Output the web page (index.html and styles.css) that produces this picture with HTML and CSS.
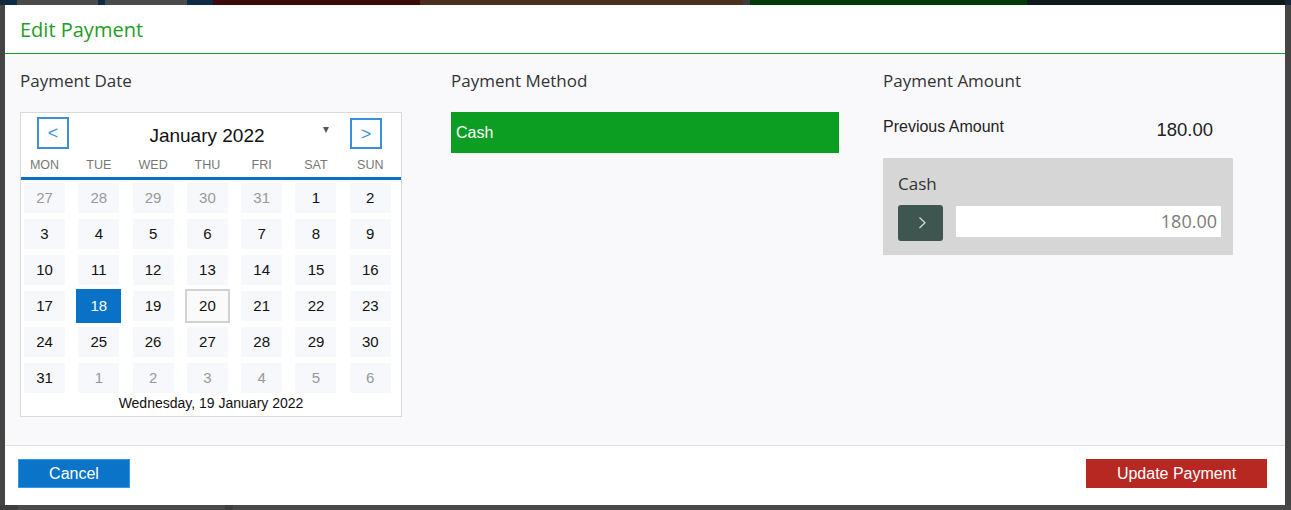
FILE: index.html
```html
<!DOCTYPE html>
<html lang="en">
<head>
<meta charset="utf-8">
<title>Edit Payment</title>
<link rel="stylesheet" href="styles.css">
</head>
<body>
<div class="app">
  <div class="topbar">
    <div class="seg s-navy w12"></div>
    <div class="seg s-gray w81"></div>
    <div class="seg s-navy w7"></div>
    <div class="seg s-gray w82"></div>
    <div class="seg s-navy w26"></div>
    <div class="seg s-red w207"></div>
    <div class="seg s-brown w323"></div>
    <div class="seg s-mid w7"></div>
    <div class="seg s-green w277"></div>
    <div class="seg s-dark w258"></div>
  </div>
  <div class="app-main"></div>
  <div class="bottombar">
    <div class="seg b-dark w18"></div>
    <div class="seg b-gray w207"></div>
    <div class="seg b-dark w8"></div>
    <div class="seg b-gray2 grow"></div>
  </div>
</div>

<div class="modal">
  <header class="modal-head">
    <h1 class="modal-title">Edit Payment</h1>
  </header>
  <div class="modal-rule"></div>

  <section class="modal-body">
    <div class="col">
      <h2 class="col-label">Payment Date</h2>
      <div class="cal">
        <div class="cal-head">
          <button class="cal-nav">&lt;</button>
          <div class="cal-month">January 2022<span class="cal-caret"></span></div>
          <button class="cal-nav">&gt;</button>
        </div>
        <div class="cal-grid cal-dow">
          <span>MON</span><span>TUE</span><span>WED</span><span>THU</span><span>FRI</span><span>SAT</span><span>SUN</span>
        </div>
        <div class="cal-grid cal-days">
          <span class="day other">27</span><span class="day other">28</span><span class="day other">29</span><span class="day other">30</span><span class="day other">31</span><span class="day">1</span><span class="day">2</span>
          <span class="day">3</span><span class="day">4</span><span class="day">5</span><span class="day">6</span><span class="day">7</span><span class="day">8</span><span class="day">9</span>
          <span class="day">10</span><span class="day">11</span><span class="day">12</span><span class="day">13</span><span class="day">14</span><span class="day">15</span><span class="day">16</span>
          <span class="day">17</span><span class="day selected">18</span><span class="day">19</span><span class="day today">20</span><span class="day">21</span><span class="day">22</span><span class="day">23</span>
          <span class="day">24</span><span class="day">25</span><span class="day">26</span><span class="day">27</span><span class="day">28</span><span class="day">29</span><span class="day">30</span>
          <span class="day">31</span><span class="day other">1</span><span class="day other">2</span><span class="day other">3</span><span class="day other">4</span><span class="day other">5</span><span class="day other">6</span>
        </div>
        <div class="cal-foot">Wednesday, 19 January 2022</div>
      </div>
    </div>

    <div class="col">
      <h2 class="col-label">Payment Method</h2>
      <div class="method">Cash</div>
    </div>

    <div class="col">
      <h2 class="col-label">Payment Amount</h2>
      <div class="amount">
        <div class="prev-row">
          <span class="prev-label">Previous Amount</span>
          <span class="prev-value">180.00</span>
        </div>
        <div class="tender">
          <div class="tender-label">Cash</div>
          <div class="tender-row">
            <button class="tender-btn" aria-label="Fill">
              <svg width="45" height="36" viewBox="0 0 45 36"><polyline points="21.5,12.5 27,17.8 21.5,23" fill="none" stroke="#d8dedc" stroke-width="1.2"/></svg>
            </button>
            <div class="tender-input">180.00</div>
          </div>
        </div>
      </div>
    </div>
  </section>

  <footer class="modal-foot">
    <button class="btn btn-cancel">Cancel</button>
    <button class="btn btn-update">Update Payment</button>
  </footer>
</div>
</body>
</html>
```

FILE: styles.css
```css
* { box-sizing: border-box; }

html, body {
  margin: 0;
  padding: 0;
  height: 100%;
  overflow: hidden;
}

body {
  background: #444444;
  font-family: "Liberation Sans", Arial, sans-serif;
}

/* ---- dimmed app behind the dialog ---- */
.app {
  height: 100%;
  display: flex;
  flex-direction: column;
  background: #444444;
}
.topbar {
  height: 5px;
  display: flex;
  padding-left: 5px;
  background: #15293b;
}
.app-main { flex: 1; }
.bottombar {
  height: 5px;
  display: flex;
  background: #474747;
}
.seg { height: 100%; }
.w7 { width: 7px; }
.w8 { width: 8px; }
.w12 { width: 12px; }
.w18 { width: 18px; }
.w26 { width: 26px; }
.w81 { width: 81px; }
.w82 { width: 82px; }
.w207 { width: 207px; }
.w258 { width: 258px; }
.w277 { width: 277px; }
.w323 { width: 323px; }
.grow { flex: 1; }
.s-navy { background: #0d2b45; }
.s-gray { background: #4b4b4b; }
.s-red { background: #3b0b0b; }
.s-brown { background: #4c2f1e; }
.s-mid { background: #3c3c3c; }
.s-green { background: #043a0a; }
.s-dark { background: #111a1a; }
.b-dark { background: #3e3e3e; }
.b-gray { background: #4a4a4a; }
.b-gray2 { background: #484848; }

/* ---- dialog ---- */
.modal {
  position: fixed;
  left: 5px;
  top: 5px;
  width: 1280px;
  height: 500px;
  background: #ffffff;
  display: flex;
  flex-direction: column;
}

.modal-head {
  height: 48px;
  flex: none;
  padding: 2px 15px 0 15px;
  display: flex;
  align-items: center;
  background: #ffffff;
}
.modal-rule {
  height: 1px;
  flex: none;
  background: #0ea51f;
}
.modal-title {
  margin: 0;
  font-family: "Open Sans", sans-serif;
  font-weight: 400;
  font-size: 20px;
  line-height: 26px;
  color: #1f9d24;
}

.modal-body {
  flex: 1;
  background: #f9f9fc;
  display: grid;
  grid-template-columns: 431px 432px 1fr;
  align-content: start;
  padding: 15px 15px 0 15px;
  border-bottom: 1px solid #dedede;
}

.col-label {
  margin: 0 0 19px 0;
  font-family: "Open Sans", sans-serif;
  font-weight: 400;
  font-size: 17px;
  line-height: 24px;
  color: #333333;
}

/* ---- calendar ---- */
.cal {
  width: 382px;
  border: 1px solid #d9d9d9;
  background: #ffffff;
}
.cal-head {
  display: flex;
  align-items: flex-start;
  padding: 4px 19px 0 16px;
  height: 36px;
}
.cal-nav {
  width: 32px;
  height: 32px;
  border: 2px solid #3c8fdb;
  background: #ffffff;
  color: #3c8fdb;
  font-family: "Liberation Sans", Arial, sans-serif;
  font-size: 18px;
  line-height: 26px;
  padding: 0;
  margin: 0;
}
.cal-nav:last-child { margin-top: 1px; height: 31px; }
.cal-month {
  flex: 1;
  position: relative;
  text-align: center;
  padding: 1px 5px 0 0;
  font-size: 19px;
  line-height: 36px;
  color: #111111;
}
.cal-caret {
  position: absolute;
  right: 21px;
  top: 10px;
  width: 0;
  height: 0;
  border-left: 3.5px solid transparent;
  border-right: 3.5px solid transparent;
  border-top: 6px solid #555555;
}

.cal-grid {
  display: grid;
  grid-template-columns: repeat(7, 45px);
  column-gap: 9.3px;
  padding-left: 1px;
}
.cal-dow {
  height: 31px;
  padding-top: 4px;
  border-bottom: 3px solid #0b6fc3;
  align-items: start;
  font-size: 12.5px;
  color: #777777;
  text-align: center;
}
.cal-dow span { line-height: 24px; }

.cal-days {
  row-gap: 2px;
  margin-top: 1px;
}
.day {
  height: 34px;
  line-height: 34px;
  text-align: center;
  font-size: 15px;
  color: #111111;
  background: #f7f8fb;
  box-shadow: inset 0 0 0 2px #ffffff;
}
.day.other { color: #999999; }
.day.selected {
  background: #0a72c6;
  color: #ffffff;
  box-shadow: none;
}
.day.today {
  background: #fafafa;
  box-shadow: inset 0 0 0 2px #d2d2d2;
}
.cal-foot {
  text-align: center;
  font-size: 14px;
  line-height: 17px;
  padding-bottom: 4px;
  color: #111111;
}

/* ---- payment method ---- */
.method {
  width: 388px;
  height: 41px;
  background: #0b9e23;
  color: #ffffff;
  font-size: 16px;
  line-height: 41px;
  padding-left: 5px;
}

/* ---- amount ---- */
.amount { width: 350px; }
.prev-row {
  display: flex;
  justify-content: space-between;
  align-items: flex-start;
  height: 46px;
  padding: 5px 20px 0 0;
}
.prev-label {
  font-size: 16px;
  line-height: 20px;
  color: #222222;
}
.prev-value {
  font-size: 18.5px;
  line-height: 26px;
  color: #222222;
}
.tender {
  background: #d6d6d6;
  padding: 14px 12px 14px 15px;
}
.tender-label {
  font-family: "Open Sans", sans-serif;
  font-size: 17px;
  line-height: 24px;
  color: #333333;
  margin-bottom: 9px;
}
.tender-row {
  display: flex;
  align-items: flex-start;
  gap: 13px;
}
.tender-btn {
  width: 45px;
  height: 36px;
  border: 0;
  border-radius: 3px;
  background: #3e5550;
  padding: 0;
  display: block;
}
.tender-btn svg { display: block; }
.tender-input {
  flex: 1;
  height: 31px;
  margin-top: 1px;
  background: #ffffff;
  text-align: right;
  padding-right: 4px;
  font-family: "Open Sans", sans-serif;
  font-size: 18px;
  line-height: 31px;
  color: #7a7a7a;
}

/* ---- footer ---- */
.modal-foot {
  height: 59px;
  flex: none;
  display: flex;
  justify-content: space-between;
  align-items: flex-start;
  padding: 13px 18px 0 13px;
  background: #ffffff;
}
.btn {
  height: 29px;
  font-family: "Liberation Sans", Arial, sans-serif;
  font-size: 16px;
  color: #ffffff;
  padding: 0;
  margin: 0;
}
.btn-cancel {
  width: 112px;
  background: #0a74c9;
  border: 1px solid #3b97e6;
}
.btn-update {
  width: 181px;
  background: #b82822;
  border: 0;
}
```
